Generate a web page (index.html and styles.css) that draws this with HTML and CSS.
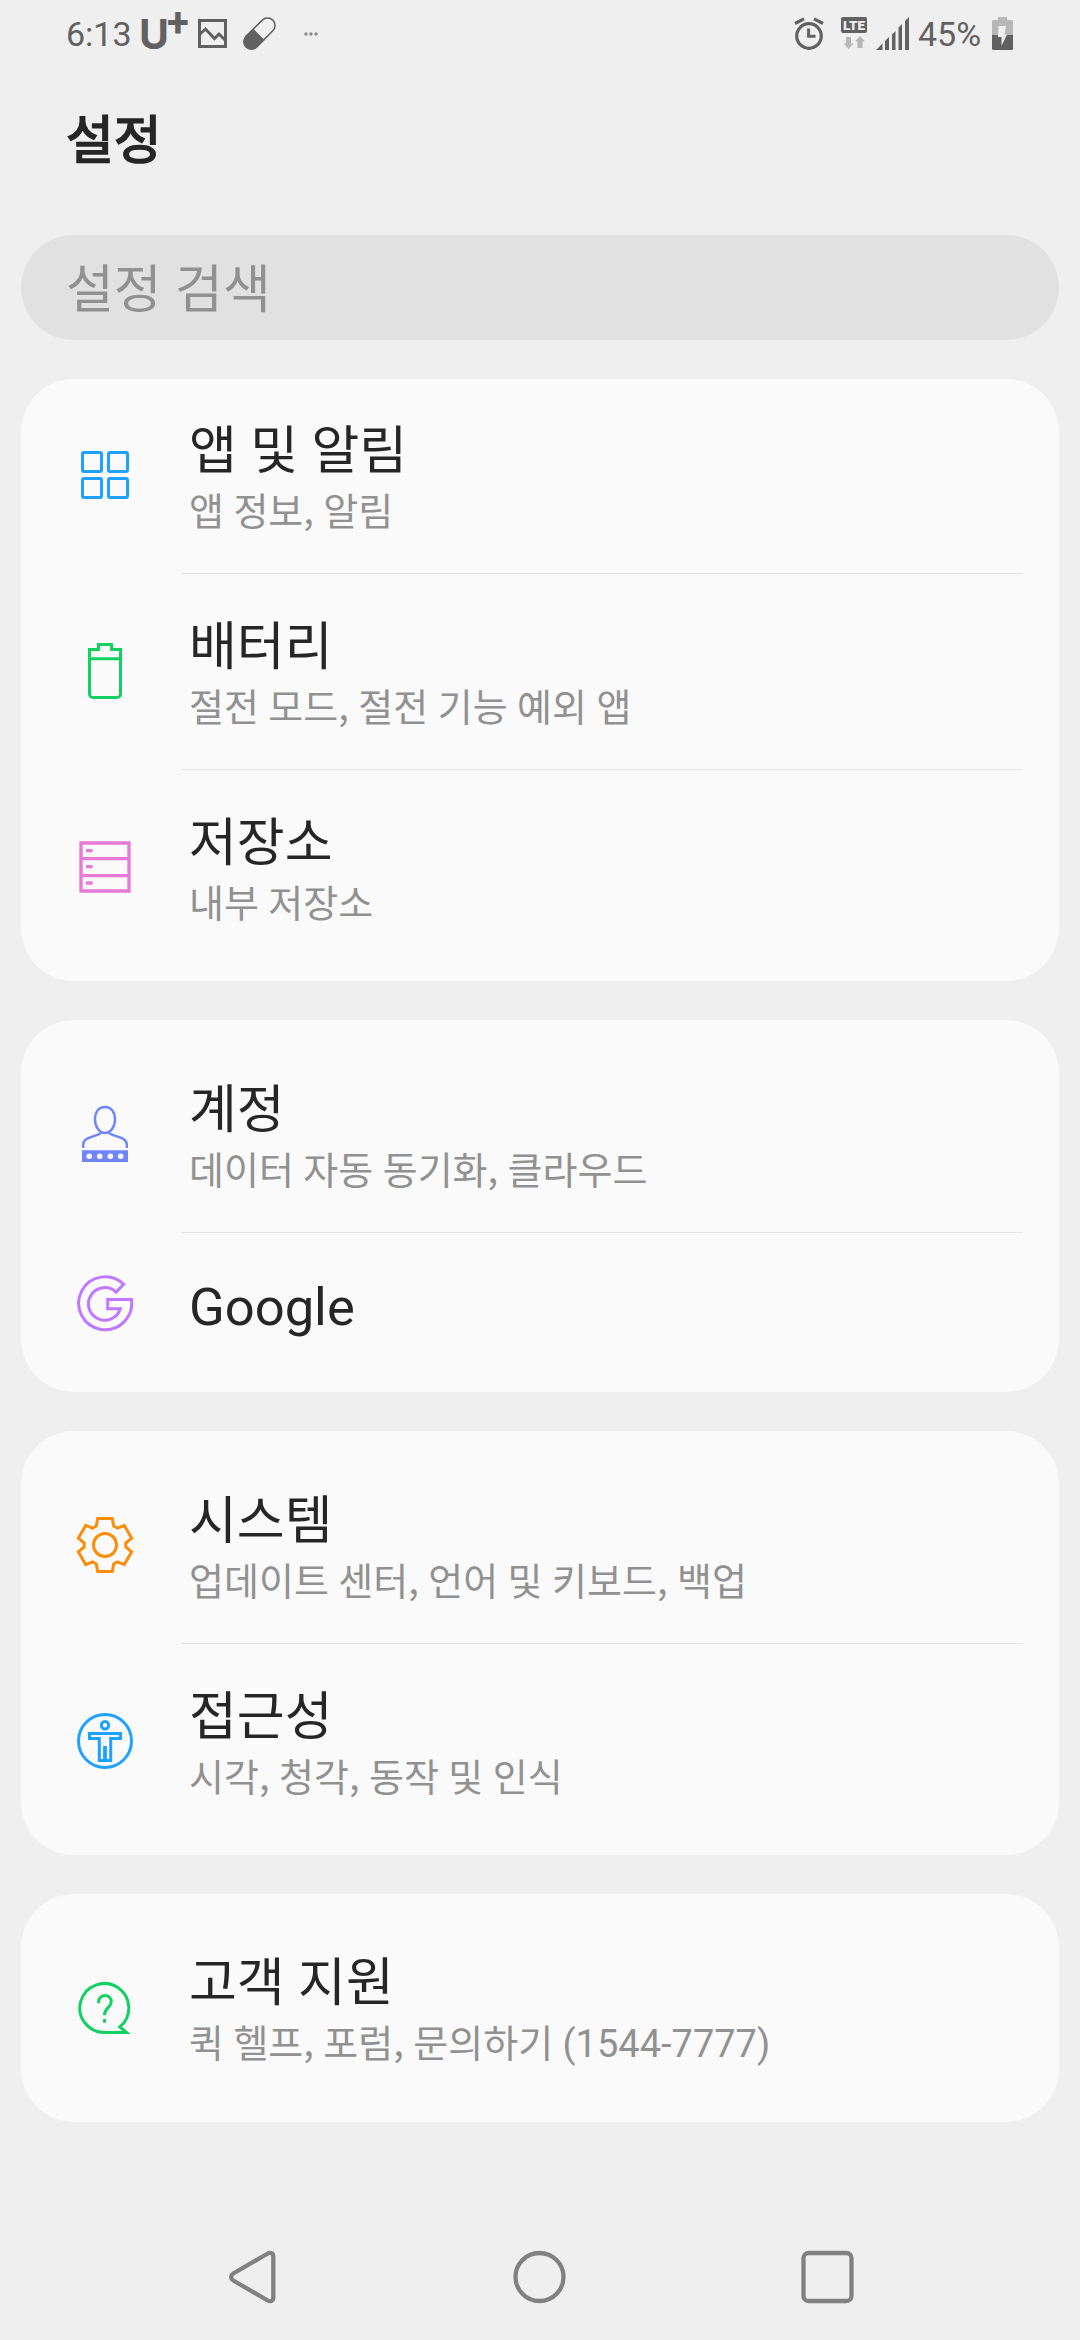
FILE: index.html
```html
<!DOCTYPE html>
<html lang="ko">
<head>
<meta charset="utf-8">
<title>설정</title>
<link rel="stylesheet" href="styles.css">
</head>
<body>
<div class="screen">
  <header class="status">
    <span class="clock">6:13</span>
    <span class="carrier">U<span class="plus">+</span></span>
    <svg class="st-image" width="29" height="29" viewBox="0 0 29 29"><path d="M1.500 1.500h26v26h-26zM2 15l5.500-5 9 9.500 4.500-4.500 6 6" fill="none" stroke="#616161" stroke-width="3"/></svg>
    <svg class="st-pill" width="33" height="33" viewBox="0 0 33 33"><g transform="rotate(-45 16.500 16.500)"><rect x="-2.400" y="9" width="37.800" height="15" rx="7.500" fill="none" stroke="#616161" stroke-width="1.500"/><path d="M15.500 8.300H5.200a8.200 8.200 0 0 0 0 16.400H15.500z" fill="#616161"/></g></svg>
    <svg class="st-more" width="14" height="4" viewBox="0 0 14 4"><g fill="#8a8a8a"><circle cx="2" cy="2" r="1.700"/><circle cx="7" cy="2" r="1.700"/><circle cx="12" cy="2" r="1.700"/></g></svg>
    <span class="grow"></span>
    <svg class="st-alarm" width="30" height="33" viewBox="0 0 30 33"><g fill="none" stroke="#616161"><circle cx="15" cy="19" r="12.300" stroke-width="3.200"/><path d="M14.600 11.500V19.200H21.500" stroke-width="3"/><path d="M1 6.500L10 1.800M20 1.800L29 6.500" stroke-width="3.200"/></g></svg>
    <span class="lte"><span class="lte-label">LTE</span>
      <svg width="26" height="14" viewBox="0 0 26 14"><path d="M5 1h5v6.500h2.500L7.500 13 2.500 7.500H5zM16.500 12h5V5.500H24L19 0 14 5.500h2.500z" fill="#b7b7b7"/></svg>
    </span>
    <svg class="st-signal" width="33" height="33" viewBox="0 0 33 33"><path d="M0 33L6.500 26.500V33zM9 33V24L13 20V33zM16 33V17.500L19.500 14V33zM22.500 33V10.500L26 7V33zM29 33V4L33 0V33z" fill="#616161"/></svg>
    <span class="percent">45%</span>
    <svg class="st-battery" width="21" height="33" viewBox="0 0 21 33"><path d="M6 0h9v3h4.500A1.500 1.500 0 0 1 21 4.500V18H0V4.500A1.500 1.500 0 0 1 1.500 3H6z" fill="#b7b7b7"/><path d="M0 18h21v13.500a1.500 1.500 0 0 1-1.500 1.500h-18A1.500 1.500 0 0 1 0 31.500z" fill="#616161"/><path d="M6.500 9H14l-1.500 8.500H15L9.500 29V20H6z" fill="#efefef"/></svg>
  </header>

  <h1 class="heading">설정</h1>
  <div class="search">설정 검색</div>

  <main class="cards">
    <section class="card first">
      <div class="row">
        <svg class="icon" viewBox="0 0 60 60" stroke="#1fa2ff"><rect x="7.500" y="7.500" width="19" height="19" rx="1.500"/><rect x="33.500" y="7.500" width="19" height="19" rx="1.500"/><rect x="7.500" y="33.500" width="19" height="19" rx="1.500"/><rect x="33.500" y="33.500" width="19" height="19" rx="1.500"/></svg>
        <div class="text"><div class="title">앱 및 알림</div><div class="sub">앱 정보, 알림</div></div>
      </div>
      <div class="row">
        <svg class="icon" viewBox="0 0 60 60" stroke="#11d163"><path d="M14.500 8.500H23.500V3.500H36.500V8.500H45.500V53a3.500 3.500 0 0 1-3.500 3.500H18a3.500 3.500 0 0 1-3.500-3.500zM14.500 17.700H45.500"/></svg>
        <div class="text"><div class="title">배터리</div><div class="sub">절전 모드, 절전 기능 예외 앱</div></div>
      </div>
      <div class="row">
        <svg class="icon" viewBox="0 0 60 60" stroke="#e879d6"><path d="M6 6H54V54H6zM6 21.700H54M6 38.600H54M11 13.700h6.700M11 29.600h6.700M11 46h6.700" stroke-width="3.300"/></svg>
        <div class="text"><div class="title">저장소</div><div class="sub">내부 저장소</div></div>
      </div>
    </section>

    <section class="card">
      <div class="row">
        <svg class="icon" viewBox="0 0 60 60" stroke="#6f86fb"><path d="M30 3C23.500 3 20 8 20 15.500S24.500 29 30 29s10-6 10-13.500S36.500 3 30 3zM8.200 44V40.500C8.200 32 23 33 26.500 28.500M51.800 44V40.500C51.800 32 37 33 33.500 28.500" stroke-width="2.400"/><path d="M7 46.300H53V58H7z" fill="#6f86fb" stroke="none"/><g fill="#fafafa" stroke="none"><circle cx="14.300" cy="52.300" r="2.800"/><circle cx="24.700" cy="52.300" r="2.800"/><circle cx="35.300" cy="52.300" r="2.800"/><circle cx="45.700" cy="52.300" r="2.800"/></g></svg>
        <div class="text"><div class="title">계정</div><div class="sub">데이터 자동 동기화, 클라우드</div></div>
      </div>
      <div class="row short">
        <svg class="icon" viewBox="0 0 60 60" stroke="#bf78ff"><path d="M48.700 10.300A26.500 26.500 0 1 0 56.400 25.400H32.700V34.700H45.300A16.300 16.300 0 1 1 41 18.100z"/></svg>
        <div class="text"><div class="title latin">Google</div></div>
      </div>
    </section>

    <section class="card">
      <div class="row">
        <svg class="icon" viewBox="0 0 60 60" stroke="#fc8d0b"><path d="M22.700 3.500H37.300L38.700 11 42.500 13.200 49.300 10.400 56.600 23.100 50.800 28V32L56.600 36.900 49.300 49.600 42.500 46.800 38.700 49 37.300 56.500H22.700L21.300 49 17.500 46.800 10.700 49.600 3.400 36.900 9.200 32V28L3.400 23.100 10.700 10.400 17.500 13.200 21.300 11z"/><circle cx="30" cy="30" r="11.500"/></svg>
        <div class="text"><div class="title">시스템</div><div class="sub">업데이트 센터, 언어 및 키보드, 백업</div></div>
      </div>
      <div class="row">
        <svg class="icon" viewBox="0 0 60 60" stroke="#1fa2ff"><circle cx="30" cy="30" r="26.500"/><circle cx="30" cy="14.300" r="3.700"/><path d="M14.500 22.500H45.500V27.500H35.700V49.500H24.300V27.500H14.500z"/><path d="M30 35V50" stroke-width="3.800"/></svg>
        <div class="text"><div class="title">접근성</div><div class="sub">시각, 청각, 동작 및 인식</div></div>
      </div>
    </section>

    <section class="card">
      <div class="row">
        <svg class="icon" viewBox="0 0 60 60" stroke="#11d163"><path d="M51.500 54.500H30A24.500 24.500 0 1 1 44.800 49z"/><path d="M23.700 25.300V23.500a6.300 6 0 0 1 12.600 0C36.300 29.500 29.500 29.500 29.500 37.300M29.500 41V44.700"/></svg>
        <div class="text"><div class="title">고객 지원</div><div class="sub">퀵 헬프, 포럼, 문의하기 <span class="latin">(1544-7777)</span></div></div>
      </div>
    </section>
  </main>

  <nav class="nav">
    <svg viewBox="0 0 60 60"><path d="M51.300 9.500V50.500c0 3.500-3 4.500-5.500 3L11.300 33.500c-3-2-3-5 0-7L45.800 6.500c2.500-1.500 5.500-.5 5.500 3z"/></svg>
    <svg viewBox="0 0 60 60"><circle cx="29.500" cy="30" r="24"/></svg>
    <svg viewBox="0 0 60 60"><rect x="5.500" y="6" width="48" height="48" rx="5"/></svg>
  </nav>
</div>
</body>
</html>
```
FILE: styles.css
```css
body {
  margin: 0;
  background: #efefef;
  color: #262626;
  font-family: "Noto Sans CJK KR", sans-serif;
}

.screen {
  display: flex;
  flex-direction: column;
  width: 1080px;
  height: 2340px;
  overflow: hidden;
}

.status {
  display: flex;
  align-items: center;
  height: 67px;
  flex: none;
  padding: 0 67px 0 66px;
  color: #616161;
  font: 34px/40px Roboto, sans-serif;
}

.status svg {
  display: block;
  flex: none;
}

.grow {
  flex: 1;
}

.clock {
  width: 73px;
}

.carrier {
  display: flex;
  width: 59px;
  font-family: Inter, sans-serif;
  font-weight: 700;
  font-size: 41px;
}

.plus {
  margin: -11px 0 0 -2px;
  font-family: Roboto, sans-serif;
  font-size: 40px;
}

.st-pill {
  margin-left: 16px;
}

.st-more {
  margin-left: 28px;
}

.lte {
  display: flex;
  flex-direction: column;
  gap: 3px;
  width: 26px;
  margin-left: 17px;
}

.lte-label {
  height: 16px;
  border-radius: 2px;
  background: #616161;
  color: #efefef;
  font: 900 13.5px/17px Roboto, sans-serif;
  text-align: center;
}

.st-signal {
  margin-left: 9px;
}

.percent {
  width: 61px;
  margin: 0 13px 0 9px;
  white-space: nowrap;
}

.heading {
  height: 168px;
  margin: 0 0 0 66px;
  flex: none;
  font-size: 52px;
  font-weight: 400;
  line-height: 140px;
  -webkit-text-stroke: 1.7px #262626;
}

.search {
  height: 105px;
  flex: none;
  box-sizing: border-box;
  margin: 0 21px;
  padding-left: 45px;
  border-radius: 53px;
  background: #e1e1e1;
  color: #919191;
  font-size: 52px;
  line-height: 101px;
  word-spacing: -1.2px;
}

.cards {
  display: flex;
  flex-direction: column;
  gap: 39px;
  margin: 39px 21px 0;
}

.card {
  padding: 16px 0;
  border-radius: 53px;
  background: #fafafa;
}

.card.first {
  padding-top: 0;
  overflow: hidden;
}

.card.first .row:first-child {
  margin-top: -2px;
}

.row {
  position: relative;
  display: flex;
  align-items: center;
  height: 196px;
  padding-left: 54px;
}

.row.short {
  height: 144px;
}

.row:not(:last-child)::after {
  content: "";
  position: absolute;
  left: 160px;
  right: 36px;
  bottom: -1px;
  height: 1px;
  background: #e5e5e5;
}

.icon {
  flex: none;
  width: 60px;
  height: 60px;
  fill: none;
  stroke-width: 3;
}

.text {
  margin-left: 54px;
  padding-bottom: 2px;
  white-space: nowrap;
  word-spacing: -1.2px;
}

.title {
  font-size: 52px;
  line-height: 70px;
}

.sub {
  color: #919191;
  font-size: 38px;
  line-height: 54px;
}

.latin {
  font-family: Roboto, sans-serif;
}

.title.latin {
  padding-top: 8px;
  font-size: 52.5px;
}

.nav {
  display: flex;
  justify-content: center;
  gap: 228px;
  margin-top: auto;
  padding-bottom: 33px;
}

.nav svg {
  width: 60px;
  height: 60px;
  fill: none;
  stroke: #818181;
  stroke-width: 4.3;
}
```
